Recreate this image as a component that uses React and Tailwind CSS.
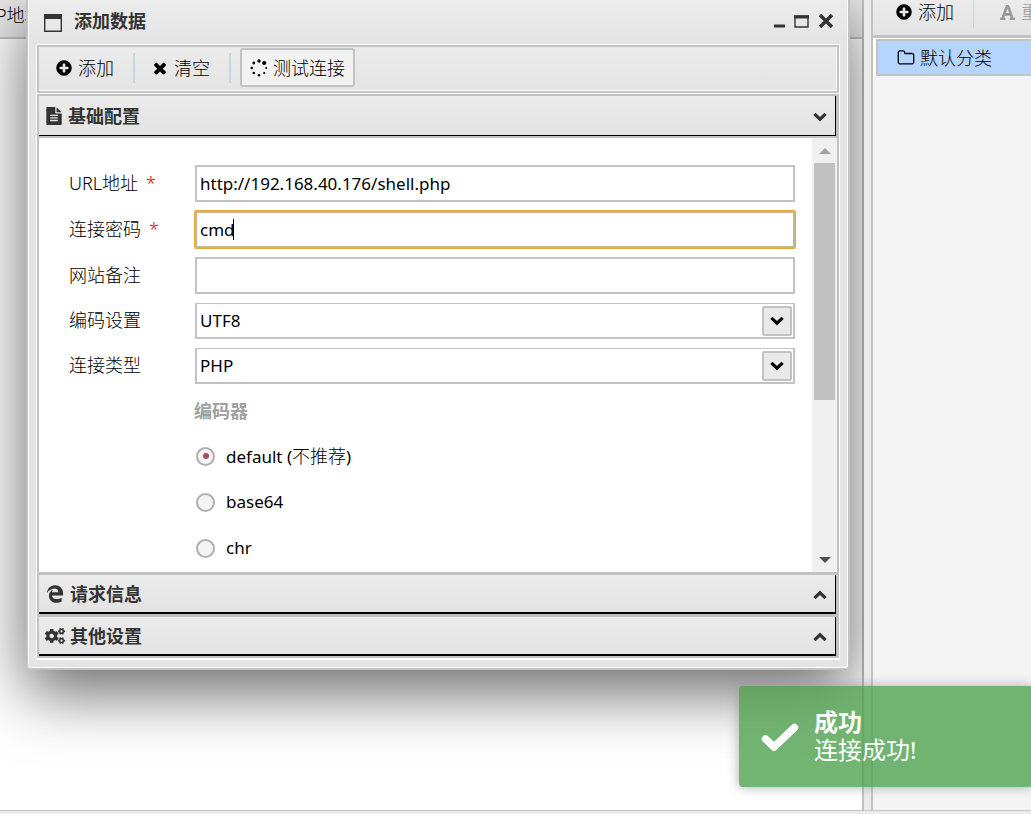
import { FaCogs, FaFont } from 'react-icons/fa';
import { FaEdgeLegacy } from 'react-icons/fa6';

const ICONS = {
  plus: 'M1344 960v-128q0-26-19-45t-45-19h-256v-256q0-26-19-45t-45-19h-128q-26 0-45 19t-19 45v256h-256q-26 0-45 19t-19 45v128q0 26 19 45t45 19h256v256q0 26 19 45t45 19h128q26 0 45-19t19-45v-256h256q26 0 45-19t19-45zm320-64q0 209-103 385.5t-279.5 279.5-385.5 103-385.5-103-279.5-279.5-103-385.5 103-385.5 279.5-279.5 385.5-103 385.5 103 279.5 279.5 103 385.5z',
  times: 'M1490 1322q0 40-28 68l-136 136q-28 28-68 28t-68-28l-294-294-294 294q-28 28-68 28t-68-28l-136-136q-28-28-28-68t28-68l294-294-294-294q-28-28-28-68t28-68l136-136q28-28 68-28t68 28l294 294 294-294q28-28 68-28t68 28l136 136q28 28 28 68t-28 68l-294 294 294 294q28 28 28 68z',
  folder: 'M1600 1312v-704q0-40-28-68t-68-28h-704q-40 0-68-28t-28-68v-64q0-40-28-68t-68-28h-320q-40 0-68 28t-28 68v960q0 40 28 68t68 28h1216q40 0 68-28t28-68zm128-704v704q0 92-66 158t-158 66h-1216q-92 0-158-66t-66-158v-960q0-92 66-158t158-66h320q92 0 158 66t66 158v32h672q92 0 158 66t66 158z',
  file: 'M1596 476q14 14 28 36h-472v-472q22 14 36 28zm-476 164h544v1056q0 40-28 68t-68 28h-1344q-40 0-68-28t-28-68v-1600q0-40 28-68t68-28h800v544q0 40 28 68t68 28zm160 736v-64q0-14-9-23t-23-9h-704q-14 0-23 9t-9 23v64q0 14 9 23t23 9h704q14 0 23-9t9-23zm0-256v-64q0-14-9-23t-23-9h-704q-14 0-23 9t-9 23v64q0 14 9 23t23 9h704q14 0 23-9t9-23zm0-256v-64q0-14-9-23t-23-9h-704q-14 0-23 9t-9 23v64q0 14 9 23t23 9h704q14 0 23-9t9-23z',
};

const Icon = ({ name }) => (
  <svg viewBox="0 0 1792 1792" className="size-[18px] shrink-0" fill="currentColor" aria-hidden="true">
    <path d={ICONS[name]} />
  </svg>
);

const Spinner = () => (
  <svg viewBox="0 0 18 18" className="size-[18px] shrink-0" fill="currentColor" aria-hidden="true">
    <circle cx="9" cy="2" r="1.7" />
    <circle cx="14.2" cy="4" r="2.1" />
    <circle cx="16.2" cy="9" r="1" />
    <circle cx="14.2" cy="14" r="1.1" />
    <circle cx="9" cy="16.2" r="1.2" />
    <circle cx="3.8" cy="14" r="1.3" />
    <circle cx="1.8" cy="9" r="1.3" />
    <circle cx="3.8" cy="4" r="1.4" />
  </svg>
);

const Chevron = ({ up }) => (
  <svg viewBox="0 0 14 10" className="h-[10px] w-[14px]" fill="none" stroke="currentColor" strokeWidth="3.2" aria-hidden="true">
    <path d={up ? 'M1.4 8.2 7 2.8l5.6 5.4' : 'M1.4 1.8 7 7.2l5.6-5.4'} />
  </svg>
);

const ToolButton = ({ icon, label, className }) => (
  <button type="button" className={`flex items-center gap-[5px] whitespace-nowrap font-light ${className}`}>
    {icon}
    <span>{label}</span>
  </button>
);

const SectionHeader = ({ icon, label, up, className }) => (
  <button
    type="button"
    className={`flex w-full items-center justify-between border-r border-black bg-linear-to-b from-[#ebebeb] to-[#e3e3e3] pl-[6px] pr-[8px] font-bold text-[#333] ${className}`}
  >
    <span className="flex items-center gap-[5px]">
      {icon}
      {label}
    </span>
    <span className="pt-[3px]">
      <Chevron up={up} />
    </span>
  </button>
);

const Label = ({ id, text, required }) => (
  <label htmlFor={id} className="w-[126px] shrink-0 pb-[2px] font-light">
    {text}
    {required && <span className="ml-2 text-red-600">*</span>}
  </label>
);

const TextRow = ({ id, label, required, value, active }) => (
  <div className="flex h-[37px] items-center">
    <Label id={id} text={label} required={required} />
    <div className="relative min-w-0 flex-1">
      <input
        id={id}
        type="text"
        defaultValue={value}
        className={`block h-[37px] w-full border-2 bg-white px-[3px] text-[17px] outline-none ${active ? 'rounded-[1px] border-[#c9b48c] ring-1 ring-[#eba83a]' : 'border-[#c2c2c2]'}`}
      />
      {active && <span className="absolute left-[38px] top-2 h-[21px] w-px bg-black" />}
    </div>
  </div>
);

const SelectRow = ({ id, label, options }) => (
  <div className="flex h-[36px] items-center">
    <Label id={id} text={label} />
    <div className="relative min-w-0 flex-1">
      <select
        id={id}
        className="block h-[36px] w-full appearance-none border-2 border-t border-[#c2c2c2] bg-white px-[3px] text-[17px] outline-none"
      >
        {options.map((o) => (
          <option key={o}>{o}</option>
        ))}
      </select>
      <span className="pointer-events-none absolute right-[3px] top-[3px] flex size-[30px] items-center justify-center rounded-[2px] border-2 border-[#c2c2c2] bg-[#e9e9e9]">
        <Chevron />
      </span>
    </div>
  </div>
);

const ENCODERS = [
  { id: 'default', label: 'default (', note: '不推荐', tail: ')' },
  { id: 'base64', label: 'base64' },
  { id: 'chr', label: 'chr' },
];

const Encoders = () => (
  <fieldset className="ml-[125px] mt-[9px]">
    <legend className="h-[36px] leading-[36px] font-bold text-[#a0a0a0]">编码器</legend>
    {ENCODERS.map((e) => (
      <label key={e.id} className="flex h-[46px] items-center pt-[8px] text-[17px]">
        <input
          type="radio"
          name="encoder"
          defaultChecked={e.id === 'default'}
          className="ml-[2px] mr-[11px] grid size-[19px] appearance-none place-items-center rounded-full border-2 border-[#b4acae] bg-[#f4f4f4] before:size-[6px] before:rounded-full checked:before:bg-[#a35050]"
        />
        <span>
          {e.label}
          {e.note && <span className="text-lg leading-6 font-light">{e.note}</span>}
          {e.tail}
        </span>
      </label>
    ))}
  </fieldset>
);

const ScrollBar = () => (
  <div className="flex w-[25px] shrink-0 flex-col items-center bg-[#f0f0f0] text-[#a3a3a3]" aria-hidden="true">
    <svg viewBox="0 0 12 6" className="mb-[9px] mt-[10px] h-[6px] w-[12px]" fill="currentColor">
      <path d="M0 6 6 0l6 6z" />
    </svg>
    <div className="h-[237px] w-[21px] bg-[#c1c1c1]" />
    <svg viewBox="0 0 12 6" className="mb-[9px] mt-auto h-[6px] w-[12px] text-[#505050]" fill="currentColor">
      <path d="M0 0h12L6 6z" />
    </svg>
  </div>
);

const Dialog = () => (
  <section
    role="dialog"
    aria-label="添加数据"
    className="absolute -top-[3px] left-[26px] right-[14px] rounded-[4px] border-2 border-[#c2c2c2] bg-[#e4e4e4] shadow-[0_22px_64px_rgba(0,0,0,0.6)]"
  >
    <div className="rounded-[2px] border border-white">
      <header className="flex h-[44px] items-center justify-between bg-linear-to-b from-[#ececec] to-[#e4e4e4] pl-[15px] pr-[13px] pb-[3px] text-[#333]">
        <h1 className="flex items-center gap-[12px] font-bold">
          <svg viewBox="0 0 18 18" className="mt-[4px] size-[18px]" fill="none" stroke="currentColor" aria-hidden="true">
            <path d="M.7.5v16.8h16.6V.5" strokeWidth="1.4" />
            <path d="M0 2.5h18" strokeWidth="5" />
          </svg>
          添加数据
        </h1>
        <div className="flex items-center gap-[9px] pt-px">
          <button type="button" aria-label="minimize">
            <svg viewBox="0 0 11 16" className="h-4 w-[11px]">
              <path d="M0 13h11" stroke="currentColor" strokeWidth="3" />
            </svg>
          </button>
          <button type="button" aria-label="maximize">
            <svg viewBox="0 0 15 16" className="h-4 w-[15px]" fill="none" stroke="currentColor">
              <path d="M1 3h13v11H1z" strokeWidth="1.4" />
              <path d="M0 4h15" strokeWidth="3" />
            </svg>
          </button>
          <button type="button" aria-label="close">
            <svg viewBox="0 0 16 16" className="size-4">
              <path d="m2 2 12 12M14 2 2 14" stroke="currentColor" strokeWidth="3.4" />
            </svg>
          </button>
        </div>
      </header>

      <div className="mx-[7px] mb-[7px] border border-b-2 border-white bg-white">
        <div className="border-2 border-[#c2c2c2]">
          <div className="flex h-[44px] items-center border-b border-r border-white bg-linear-to-b from-[#ebebeb] to-[#e4e4e4] pb-[2px] pl-4">
            <ToolButton icon={<Icon name="plus" />} label="添加" className="pr-[19px]" />
            <span className="h-[30px] w-[2px] bg-[#c5d7dc]" />
            <ToolButton icon={<Icon name="times" />} label="清空" className="pl-[16px] pr-[19px]" />
            <span className="h-[30px] w-[2px] bg-[#c5d7dc]" />
            <ToolButton
              icon={<Spinner />}
              label="测试连接"
              className="ml-[9px] h-[39px] rounded-[3px] border-2 border-[#c2c2c2] bg-[#f2f2f2] px-2"
            />
          </div>
        </div>

        <div className="mt-px border-2 border-[#c2c2c2]">
          <div className="border-b-2 border-r border-[#c2c2c2]">
            <SectionHeader icon={<Icon name="file" />} label="基础配置" className="h-[40px] border-b" />
          </div>
          <div className="flex h-[434px] overflow-hidden bg-white">
            <form className="min-w-0 flex-1 pl-[30px] pr-[17px] pt-[27px]">
              <div className="flex flex-col gap-[9px]">
                <TextRow id="url" label="URL地址" required value="http://192.168.40.176/shell.php" />
                <TextRow id="pwd" label="连接密码" required value="cmd" active />
                <TextRow id="note" label="网站备注" value="" />
                <SelectRow id="encode" label="编码设置" options={['UTF8', 'GBK']} />
                <SelectRow id="type" label="连接类型" options={['PHP', 'ASP']} />
              </div>
              <Encoders />
            </form>
            <ScrollBar />
          </div>
          <div className="border-b-2 border-r border-t-3 border-[#c2c2c2]">
            <SectionHeader
              icon={<FaEdgeLegacy className="mx-px size-[18px]" />}
              label="请求信息"
              up
              className="h-[39px] border-b-2"
            />
          </div>
          <div className="border-r border-t border-[#c2c2c2]">
            <SectionHeader icon={<FaCogs className="size-5" />} label="其他设置" up className="h-[39px] border-b-2" />
          </div>
        </div>
      </div>
    </div>
  </section>
);

const Toast = () => (
  <div
    role="status"
    className="absolute right-0 top-[686px] flex h-[101px] w-[292px] items-center rounded-l-[4px] bg-[#51a351] pl-[22px] text-2xl leading-[28px] text-white opacity-80 shadow-[0_0_12px_#999]"
  >
    <svg viewBox="0 0 38 30" className="mr-[15px] h-[30px] w-[38px]" fill="none" stroke="currentColor" aria-hidden="true">
      <path d="m4.500 17 8.500 8L33.500 5.500" strokeWidth="7.500" strokeLinecap="round" strokeLinejoin="round" />
    </svg>
    <div className="pb-[2px]">
      <div className="font-bold">成功</div>
      <div>连接成功!</div>
    </div>
  </div>
);

export default function App() {
  return (
    <div className="relative flex h-screen flex-col overflow-hidden bg-[#ebebeb] font-['Noto_Sans','Noto_Sans_CJK_SC',sans-serif] text-[18px] leading-6 text-black">
      <div className="flex min-h-0 flex-1">
        <main className="relative min-w-0 flex-1 overflow-hidden">
          <div className="h-full border-r-2 border-[#c2c2c2] bg-white">
            <div className="h-[39px] overflow-hidden border-b-2 border-[#c2c2c2] bg-[#e8e8e8] pt-[3px] font-light">
              <span className="-ml-1">P地址</span>
            </div>
          </div>
          <Dialog />
        </main>
        <div className="w-[7px] bg-[#ebebeb]" />
        <aside className="w-[160px] overflow-hidden border-l-2 border-[#c2c2c2] bg-[#f4f4f4]">
          <div className="flex h-[38px] items-start border-b-3 border-[#c2c2c2] bg-linear-to-b from-[#ebebeb] to-[#e4e4e4] pl-[22px]">
            <ToolButton icon={<Icon name="plus" />} label="添加" className="pr-[19px]" />
            <span className="h-[28px] w-px shrink-0 bg-[#c5d7dc]" />
            <ToolButton icon={<FaFont className="size-[17px]" />} label="重命名" className="pl-[25px] text-[#999]" />
          </div>
          <div className="bg-white pl-[3px] pt-px">
            <a href="#default" className="flex h-[37px] items-center gap-[5px] whitespace-nowrap border-2 border-r-0 border-[#c2c2c2] bg-[#b5d5ff] pl-[19px] font-light">
              <Icon name="folder" />
              默认分类
            </a>
          </div>
        </aside>
      </div>
      <footer className="h-1 border-t border-[#c2c2c2] bg-[#ebebeb]" />
      <Toast />
    </div>
  );
}
